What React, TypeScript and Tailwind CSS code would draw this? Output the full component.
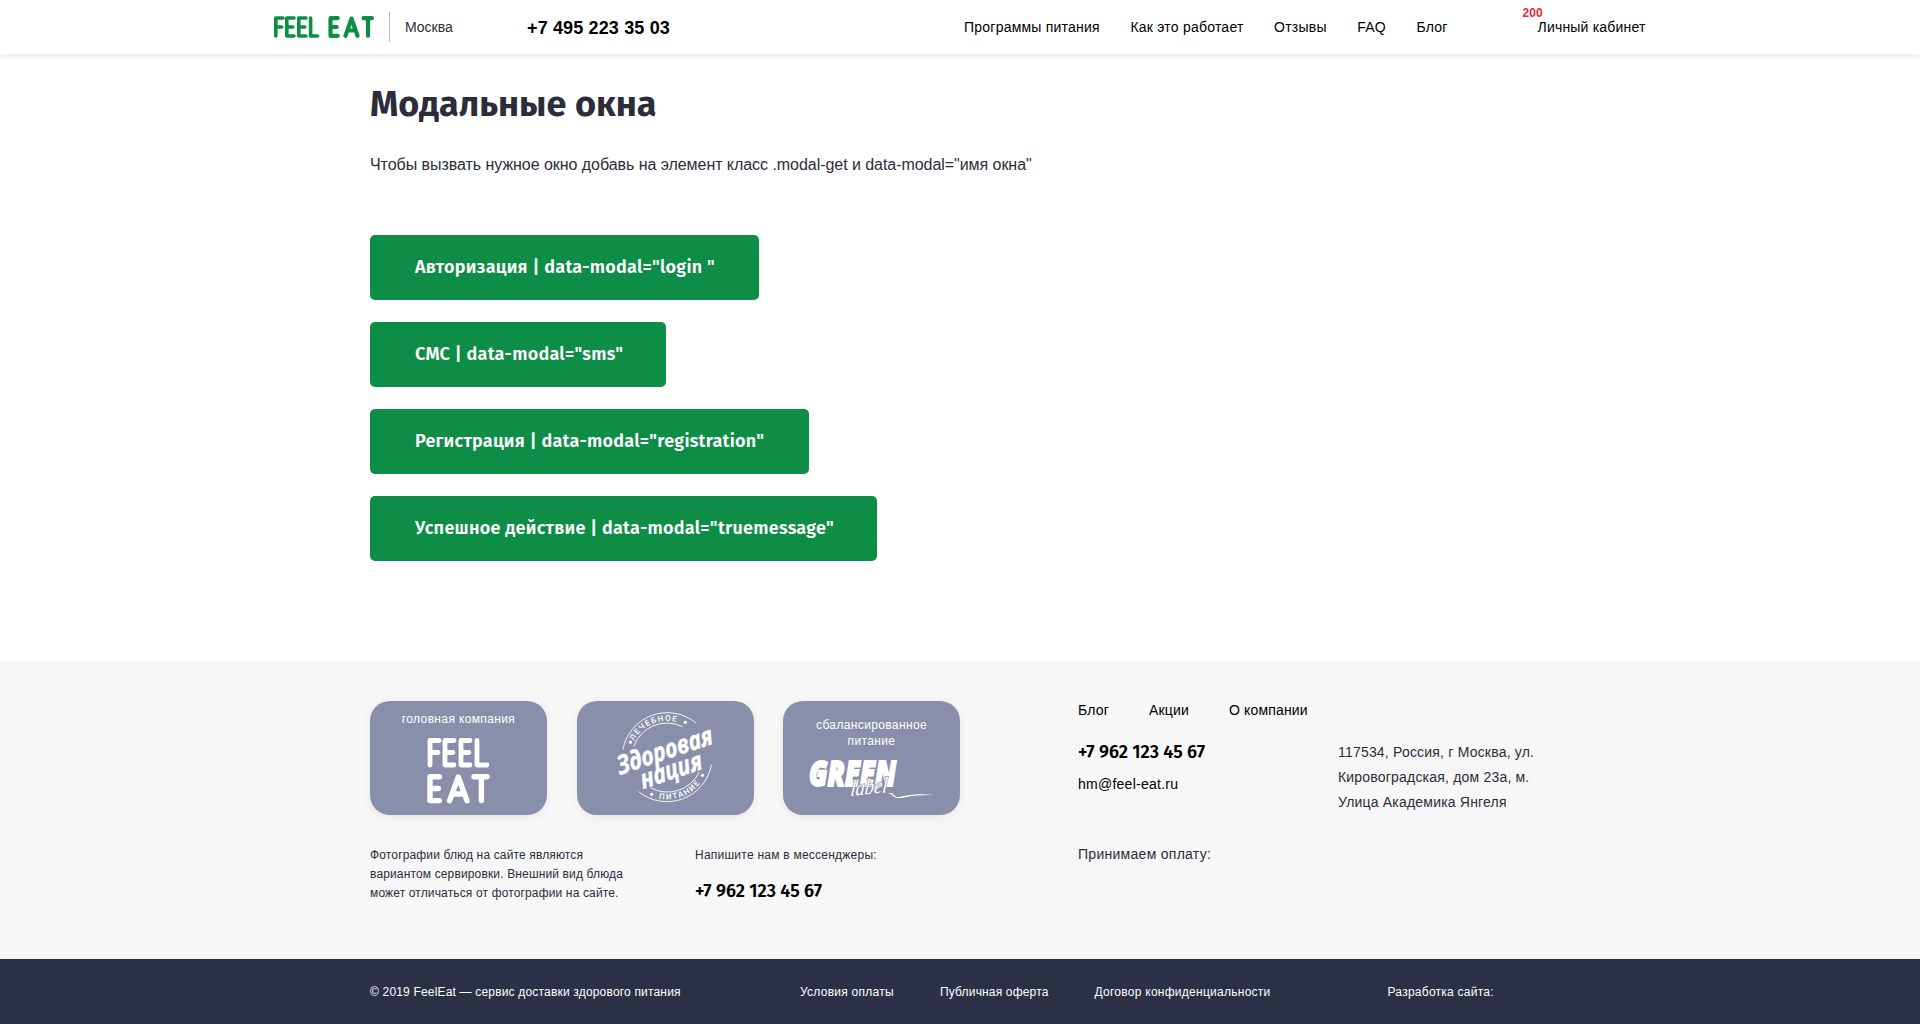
import React from "react";

function HeaderLogo() {
  return (
    <svg className="h-[22px] w-[100px]" viewBox="0 0 100 22" fill="none" stroke="#0e8d46" strokeWidth="3.6" strokeLinecap="round" strokeLinejoin="round" aria-label="Feel Eat">
      <path d="M1.8 20V2h7.2M1.8 11h6M12.8 2H20M12.8 11h6M12.8 20H20M12.8 2v18M24.8 2H32M24.8 11h6M24.8 20H32M24.8 2v18M36.6 2v18h7" />
      <path strokeWidth="4.2" d="M56.5 2.2h7.2M56.500 11h6.2M56.5 19.8h7.2M56.5 2.2v17.6M71.5 19.8L77.5 2.6l6 17.2M74.5 14.5h6M89.5 2.2h8.4M94 2.2v17.6" />
    </svg>
  );
}

function StackedLogo() {
  return (
    <svg className="h-[68px] w-[64px]" viewBox="0 0 64 68" fill="none" stroke="#fff" strokeWidth="4.8" strokeLinecap="round" strokeLinejoin="round" aria-label="Feel Eat">
      <path d="M3 28V3.5h9.200M3 15.5h8M18 3.5h9M18 15.5h8M18 28h9M18 3.5V28M34 3.5h9M34 15.5h8M34 28h9M34 3.5V28M50 3.5V28h10" />
      <path strokeWidth="5.4" d="M3 39.8h9.4M3 51.5h8.4M3 63.6h9.4M3 39.8v23.8M22.6 63.6L31.3 40l8.7 23.6M26 57h10.6M47 39.8h13M54.4 39.8v23.8" />
    </svg>
  );
}

function NationBadge() {
  return (
    <svg className="h-[114px] w-[177px]" viewBox="0 0 177 114" fill="none" stroke="#fff" strokeLinecap="round">
      <defs>
        <path id="arcTop" d="M55.6 42.700A36.700 36.700 0 0 1 110 26" />
        <path id="arcBottom" d="M78 96.800A42.500 42.500 0 0 0 127 76.800" />
      </defs>
      <path strokeWidth="0.9" d="M46 48A45 45 0 0 1 118.5 21.5M57 45A34.6 34.6 0 0 1 105 25.5M62 91A45 45 0 0 0 134.4 64M74 87A34.8 34.8 0 0 0 122 71.5" />
      <g fill="#fff" stroke="none">
        <circle cx="53.4" cy="41.2" r="1.6" />
        <circle cx="108.3" cy="21.3" r="1.6" />
        <circle cx="74.7" cy="93.3" r="1.6" />
        <circle cx="125.5" cy="74.3" r="1.6" />
        <text className="font-['Roboto',sans-serif] text-[8px] font-medium tracking-normal">
          <textPath href="#arcTop" startOffset="3" textLength="50">ЛЕЧЕБНОЕ</textPath>
        </text>
        <text className="font-['Roboto',sans-serif] text-[8px] font-medium tracking-normal">
          <textPath href="#arcBottom" startOffset="4" textLength="46">ПИТАНИЕ</textPath>
        </text>
        <g className="font-['Open_Sans',sans-serif] font-bold tracking-normal italic" stroke="#fff" strokeWidth="0.4">
          <text className="text-[26px]" transform="translate(42.5 74) rotate(-18.5) skewX(-4)" textLength="100" lengthAdjust="spacingAndGlyphs">Здоровая</text>
          <text className="text-[26px]" transform="translate(66 88) rotate(-18.5) skewX(-4)" textLength="64" lengthAdjust="spacingAndGlyphs">нация</text>
        </g>
      </g>
    </svg>
  );
}

function GreenLabel() {
  return (
    <svg className="h-[44px] w-[130px] overflow-visible" viewBox="0 0 130 44" fill="#fff">
      <text className="font-['Open_Sans',sans-serif] text-[36px] font-extrabold tracking-normal italic" x="2" y="28.500" textLength="87" lengthAdjust="spacingAndGlyphs" stroke="#fff" strokeWidth="1.8">GREEN</text>
      <text className="font-['Liberation_Serif',serif] text-[22px] tracking-normal italic" transform="translate(43 39) rotate(-6) skewX(-12)" textLength="37" lengthAdjust="spacingAndGlyphs" stroke="#898fab" strokeWidth="1.4" paintOrder="stroke">label</text>
      <path d="M80 37c4-2 6-1 7 1 2 3 5 2 10 1 10-2 19-2 30-1-11-.2-21 .6-30 2.4-6 1.2-9 .6-11-1.4-1.500-2-3-2.400-6-2z" />
    </svg>
  );
}

function Card({ children }: { children: React.ReactNode }) {
  return <div className="flex h-[114px] w-[177px] flex-col items-center rounded-[20px] bg-[#898fab] text-center text-xs leading-4 tracking-[0.03em] text-white shadow-[0_2px_8px_rgba(0,0,0,0.07)]">{children}</div>;
}

const buttons = [
  { text: 'Авторизация | data-modal="login "', width: "w-[389px]" },
  { text: 'СМС | data-modal="sms"', width: "w-[296px]" },
  { text: 'Регистрация | data-modal="registration"', width: "w-[439px]" },
  { text: 'Успешное действие | data-modal="truemessage"', width: "w-[507px]" },
];

export default function App() {
  return (
    <div className="flex h-[1024px] w-[1920px] flex-col overflow-hidden bg-white font-['Liberation_Sans',Arial,sans-serif] text-sm tracking-[0.018em] text-[#2b2d3a]">
      <header className="flex h-[54px] shrink-0 items-center bg-white pl-[274px] shadow-[0_2px_6px_rgba(0,0,0,0.1)]">
        <HeaderLogo />
        <div className="ml-[15px] h-[30px] w-px bg-[#b5b6c0]" />
        <span className="ml-[15px] w-[122px] tracking-normal">Москва</span>
        <a className="w-[437px] pt-[2px] text-lg font-bold tracking-[0.008em] text-black">+7 495 223 35 03</a>
        <nav className="flex gap-[30.5px] tracking-[0.016em] text-black">
          <a>Программы питания</a>
          <a>Как это работает</a>
          <a>Отзывы</a>
          <a>FAQ</a>
          <a>Блог</a>
        </nav>
        <div className="relative ml-[90px] tracking-[0.014em] text-black">
          <span className="absolute -top-[12px] -left-[15px] text-xs font-bold tracking-normal text-[#e8293f]">200</span>
          Личный кабинет
        </div>
      </header>

      <main className="h-[607px] shrink-0 pt-7 pl-[370px]">
        <h1 className="font-['Fira_Sans','Noto_Sans',sans-serif] text-4xl leading-[44px] font-bold tracking-normal">Модальные окна</h1>
        <p className="mt-[27px] text-base leading-6 tracking-[-0.003em]">Чтобы вызвать нужное окно добавь на элемент класс .modal-get и data-modal="имя окна"</p>
        <div className="mt-[58px] flex flex-col items-start gap-[22px]">
          {buttons.map((b) => (
            <button key={b.text} className={`${b.width} h-[65px] rounded-[5px] bg-[#0e8d46] pb-[2px] pl-[45px] text-left font-['Fira_Sans','Noto_Sans',sans-serif] text-lg font-semibold tracking-[0.014em] whitespace-nowrap text-white`}>
              {b.text}
            </button>
          ))}
        </div>
      </main>

      <footer className="flex h-[363px] shrink-0 flex-col">
        <div className="flex h-[298px] bg-[#f7f7f7] pt-10 pl-[370px]">
          <div className="w-[708px]">
            <div className="flex gap-[29.5px]">
              <Card>
                <span className="mt-[10px]">головная компания</span>
                <div className="mt-[10px]"><StackedLogo /></div>
              </Card>
              <Card><NationBadge /></Card>
              <Card>
                <span className="mt-4 w-[120px]">сбалансированное питание</span>
                <div className="mt-[8px]"><GreenLabel /></div>
              </Card>
            </div>
            <div className="mt-[31px] flex text-xs leading-[19px]">
              <p className="w-[325px] tracking-[0.012em]">Фотографии блюд на сайте являются<br />вариантом сервировки. Внешний вид блюда<br />может отличаться от фотографии на сайте.</p>
              <div>
                <p className="tracking-[0.02em]">Напишите нам в мессенджеры:</p>
                <a className="mt-[14px] block font-['Fira_Sans','Noto_Sans',sans-serif] text-lg leading-6 font-semibold tracking-normal text-black">+7 962 123 45 67</a>
              </div>
            </div>
          </div>
          <div>
            <nav className="flex gap-10 leading-[18px] tracking-[0.012em] text-black">
              <a>Блог</a>
              <a>Акции</a>
              <a>О компании</a>
            </nav>
            <div className="mt-[21px] flex leading-[25px]">
              <div className="w-[260px] text-black">
                <a className="block font-['Fira_Sans','Noto_Sans',sans-serif] text-lg leading-[25px] font-semibold tracking-normal">+7 962 123 45 67</a>
                <a className="mt-[7px] block">hm@feel-eat.ru</a>
              </div>
              <p className="tracking-[0.014em]">117534, Россия, г Москва, ул.<br />Кировоградская, дом 23а, м.<br />Улица Академика Янгеля</p>
            </div>
            <p className="mt-[30px] leading-[18px] tracking-[0.02em]">Принимаем оплату:</p>
          </div>
        </div>
        <div className="flex h-[65px] items-center bg-[#2c3047] pl-[370px] text-xs text-white">
          <span className="w-[430px] tracking-[0.015em]">© 2019 FeelEat — сервис доставки здорового питания</span>
          <a className="w-[140px]">Условия оплаты</a>
          <a className="w-[154.500px] tracking-[0.014em]">Публичная оферта</a>
          <a className="w-[293px] tracking-[0.022em]">Договор конфиденциальности</a>
          <span>Разработка сайта:</span>
        </div>
      </footer>
    </div>
  );
}
